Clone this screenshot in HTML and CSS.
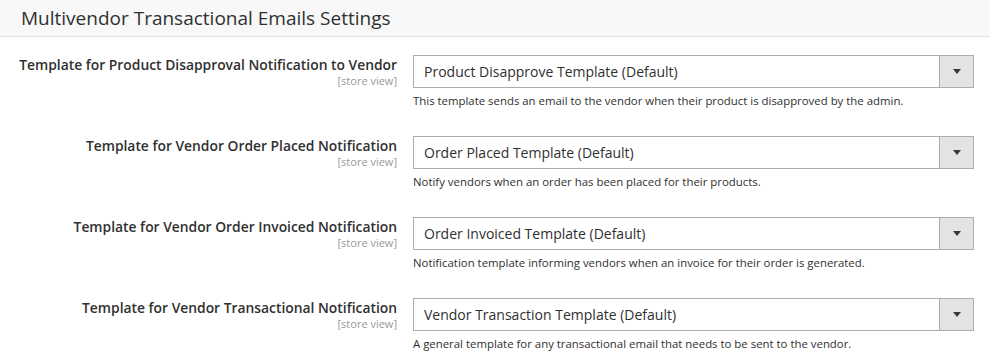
FILE: index.html
```html
<!DOCTYPE html>
<html>
<head>
    <meta charset="UTF-8">
    <link rel="stylesheet" href="styles.css">
</head>
<body>
<div class="section-head">Multivendor Transactional Emails Settings</div>
<div class="fields">
    <div class="row">
        <div class="label">
            <span>Template for Product Disapproval Notification to Vendor</span>
            <span class="scope">[store view]</span>
        </div>
        <div class="value">
            <div class="select"><span class="text">Product Disapprove Template (Default)</span><span class="arrow"></span></div>
            <p class="note">This template sends an email to the vendor when their product is disapproved by the admin.</p>
        </div>
    </div>
    <div class="row">
        <div class="label">
            <span>Template for Vendor Order Placed Notification</span>
            <span class="scope">[store view]</span>
        </div>
        <div class="value">
            <div class="select"><span class="text">Order Placed Template (Default)</span><span class="arrow"></span></div>
            <p class="note">Notify vendors when an order has been placed for their products.</p>
        </div>
    </div>
    <div class="row">
        <div class="label">
            <span>Template for Vendor Order Invoiced Notification</span>
            <span class="scope">[store view]</span>
        </div>
        <div class="value">
            <div class="select"><span class="text">Order Invoiced Template (Default)</span><span class="arrow"></span></div>
            <p class="note">Notification template informing vendors when an invoice for their order is generated.</p>
        </div>
    </div>
    <div class="row">
        <div class="label">
            <span>Template for Vendor Transactional Notification</span>
            <span class="scope">[store view]</span>
        </div>
        <div class="value">
            <div class="select"><span class="text">Vendor Transaction Template (Default)</span><span class="arrow"></span></div>
            <p class="note">A general template for any transactional email that needs to be sent to the vendor.</p>
        </div>
    </div>
</div>
</body>
</html>
```

FILE: styles.css
```css
body,div,p,span{margin: 0;padding: 0;}
body{background: #fff;color: #303030;font-family: "Open Sans", "Noto Sans", sans-serif;width: 990px;}
.section-head{
    height: 36px;line-height: 36px;
    padding-left: 21px;
    background: #f8f8f8;border-bottom: 1px solid #e3e3e3;
    font-size: 19px;color: #303030;
}
.fields{padding: 18px 16px 0 0;}
.row{display: grid;grid-template-columns: 397px 1fr;column-gap: 16px;margin-bottom: 26px;}
.row:last-child{margin-bottom: 0;}
.label{
    display: flex;flex-direction: column;align-items: flex-end;
    text-align: right;padding-top: 1px;
    font-size: 13.85px;font-weight: 600;line-height: 18px;
}
.scope{font-size: 11px;font-weight: 400;color: #999;line-height: 13px;}
.select{
    display: flex;height: 33px;box-sizing: border-box;
    border: 1px solid #adadad;background: #fff;
}
.select .text{flex: 1;padding-left: 10px;line-height: 31px;font-size: 14px;}
.arrow{
    width: 33px;background: #e3e3e3;border-left: 1px solid #adadad;
    display: flex;align-items: center;justify-content: center;
}
.arrow::after{
    content: "";border-top: 5px solid #41362f;
    border-left: 4px solid transparent;border-right: 4px solid transparent;
}
.note{margin-top: 4px;font-size: 11.4px;line-height: 18px;}
```
